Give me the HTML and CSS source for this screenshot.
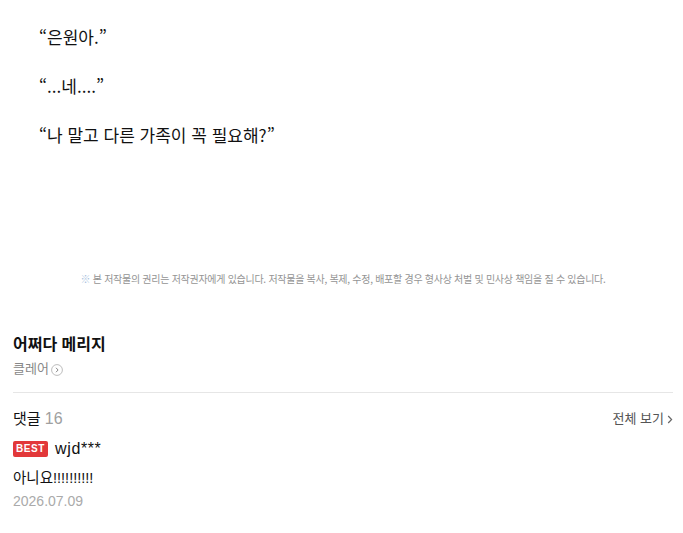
FILE: index.html
```html
<!DOCTYPE html>
<html lang="ko">
<head>
<meta charset="utf-8">
<link rel="stylesheet" href="styles.css">
</head>
<body>
<main class="page">
  <section class="story">
    <p>“은원아.”</p>
    <p>“...네....”</p>
    <p>“나 말고 다른 가족이 꼭 필요해?”</p>
  </section>
  <p class="notice"><span class="mark">※</span> 본 저작물의 권리는 저작권자에게 있습니다. 저작물을 복사, 복제, 수정, 배포할 경우 형사상 처벌 및 민사상 책임을 질 수 있습니다.</p>
  <section class="work">
    <h2 class="title">어쩌다 메리지</h2>
    <div class="author">클레어
      <svg class="circ" width="12" height="12" viewBox="0 0 12 12"><circle cx="6" cy="6" r="5.4" fill="none" stroke="#b5b5b5" stroke-width="0.9"/><path d="M5 3.8 L7.1 6 L5 8.2" fill="none" stroke="#888" stroke-width="1"/></svg>
    </div>
  </section>
  <section class="comments">
    <div class="head">
      <div class="label">댓글 <span class="count">16</span></div>
      <div class="all">전체 보기 <svg width="6" height="9" viewBox="0 0 6 9"><path d="M1.2 1 L4.6 4.5 L1.2 8" fill="none" stroke="#666" stroke-width="1.2"/></svg></div>
    </div>
    <div class="comment">
      <div class="who"><span class="best">BEST</span><span class="name">wjd***</span></div>
      <div class="text">아니요!!!!!!!!!!</div>
      <div class="date">2026.07.09</div>
    </div>
  </section>
</main>
</body>
</html>
```
FILE: styles.css
```css
* { box-sizing: border-box; }
html, body { margin: 0; padding: 0; background: #fff; }
body {
  font-family: "Liberation Sans", "Noto Sans CJK KR", sans-serif;
  color: #111;
}
.page { padding: 0 10px 0 13px; }
.story { padding: 22px 0 0 26px; }
.story p {
  margin: 0 0 20px;
  font-family: "Noto Sans CJK KR", sans-serif;
  font-size: 17px;
  line-height: 29px;
  color: #111;
}
.notice {
  margin: 123px 0 0;
  text-align: center;
  font-family: "Noto Sans CJK KR", sans-serif;
  font-size: 10px;
  line-height: 14px;
  color: #949494;
  letter-spacing: -0.28px;
}
.notice .mark { color: #a9bfe0; }
.work {
  margin-top: 47px;
  padding-bottom: 12px;
  border-bottom: 1px solid #e6e6e6;
}
.title {
  margin: 0;
  font-size: 16px;
  line-height: 24px;
  font-weight: 700;
  color: #111;
}
.author {
  margin-top: 1px;
  font-size: 13px;
  line-height: 22px;
  color: #888;
  display: flex;
  align-items: center;
  gap: 2px;
}
.circ { margin-top: 1px; }
.comments { padding-top: 15px; }
.head {
  display: flex;
  justify-content: space-between;
  align-items: center;
  height: 22px;
}
.label { font-size: 15px; line-height: 22px; color: #111; }
.count { color: #a0a0a0; font-size: 16px; }
.all {
  font-size: 13px;
  line-height: 22px;
  color: #555;
  display: flex;
  align-items: center;
  gap: 3px;
}
.comment { margin-top: 10px; }
.who { display: flex; align-items: center; gap: 7px; height: 18px; }
.best {
  background: #e2383a;
  color: #fff;
  font-weight: 700;
  font-size: 10px;
  line-height: 16px;
  padding: 0 3px;
  border-radius: 2px;
  letter-spacing: 0.6px;
}
.name { font-size: 16px; line-height: 18px; color: #111; letter-spacing: 0.6px; }
.text { margin-top: 10px; font-size: 14.5px; line-height: 20px; color: #111; }
.date { margin-top: 3px; font-size: 14px; line-height: 20px; color: #aaa; }
```
